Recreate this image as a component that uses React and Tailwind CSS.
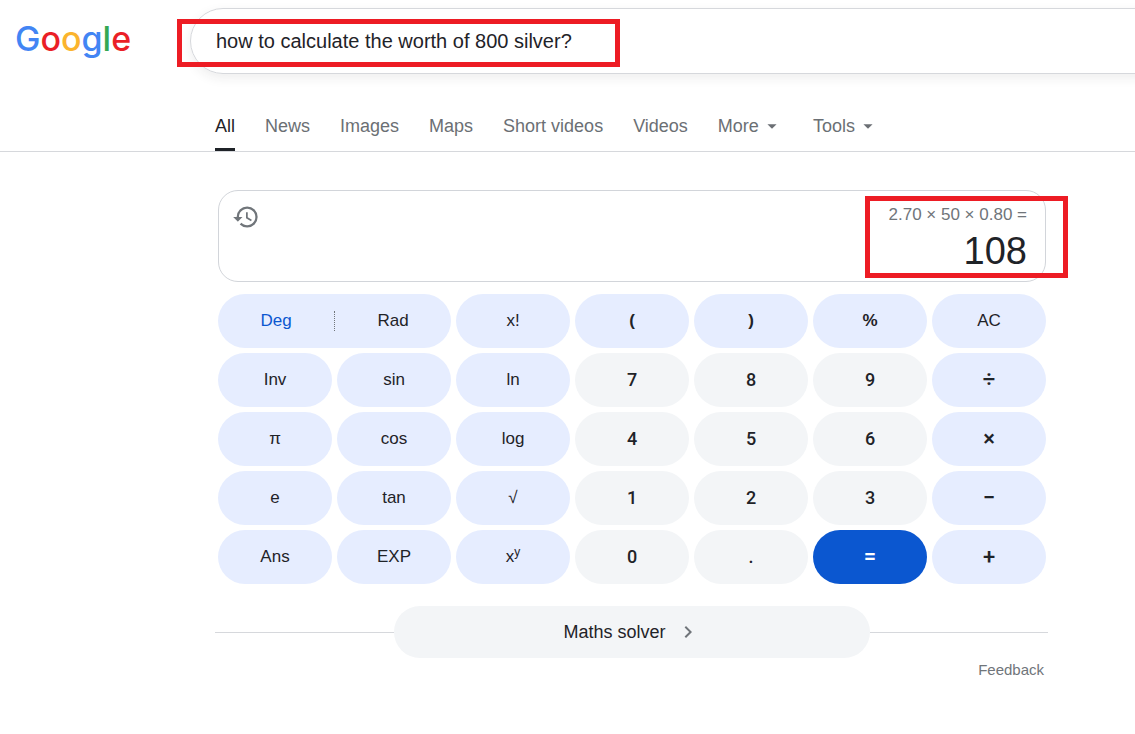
import React from 'react';
import { MdArrowDropDown, MdChevronRight, MdHistory } from 'react-icons/md';

const tabs = ['All', 'News', 'Images', 'Maps', 'Short videos', 'Videos'];
const menus = ['More', 'Tools'];

const keys = [
  { label: 'x!', kind: 'fn' },
  { label: '(', kind: 'op' },
  { label: ')', kind: 'op' },
  { label: '%', kind: 'op' },
  { label: 'AC', kind: 'fn' },
  { label: 'Inv', kind: 'fn' },
  { label: 'sin', kind: 'fn' },
  { label: 'ln', kind: 'fn' },
  { label: '7', kind: 'num' },
  { label: '8', kind: 'num' },
  { label: '9', kind: 'num' },
  { label: '÷', kind: 'sign' },
  { label: 'π', kind: 'fn' },
  { label: 'cos', kind: 'fn' },
  { label: 'log', kind: 'fn' },
  { label: '4', kind: 'num' },
  { label: '5', kind: 'num' },
  { label: '6', kind: 'num' },
  { label: '×', kind: 'sign' },
  { label: 'e', kind: 'fn' },
  { label: 'tan', kind: 'fn' },
  { label: '√', kind: 'fn' },
  { label: '1', kind: 'num' },
  { label: '2', kind: 'num' },
  { label: '3', kind: 'num' },
  { label: '−', kind: 'sign' },
  { label: 'Ans', kind: 'fn' },
  { label: 'EXP', kind: 'fn' },
  { label: 'x', sup: 'y', kind: 'fn' },
  { label: '0', kind: 'num' },
  { label: '.', kind: 'num' },
  { label: '=', kind: 'equals' },
  { label: '+', kind: 'sign' },
];

const keyStyles = {
  fn: 'bg-[#e6edff] text-[17px]',
  op: 'bg-[#e6edff] text-[17px] font-bold',
  sign: 'bg-[#e6edff] pb-[2px] font-[Roboto] text-[22px] font-medium',
  num: 'bg-[#f3f5f7] font-[Roboto] text-lg font-medium',
  equals: 'bg-[#0b57d0] pb-[2px] font-[Roboto] text-[22px] font-medium text-white',
};

const Logo = () => (
  <a href="#" aria-label="Google" className="block w-[190px] shrink-0 pl-[15px] font-[Inter] text-[34px] leading-[62px] font-medium">
    <span className="text-[#4285f4]">G</span>
    <span className="text-[#ea1f27]">o</span>
    <span className="text-[#fbb42d]">o</span>
    <span className="text-[#4285f4]">g</span>
    <span className="text-[#34a853]">l</span>
    <span className="text-[#ea1f27]">e</span>
  </a>
);

const Key = ({ label, sup, kind }) => (
  <button type="button" className={`flex h-[54px] items-center justify-center rounded-full ${keyStyles[kind]}`}>
    <span>
      {label}
      {sup && <sup className="text-xs">{sup}</sup>}
    </span>
  </button>
);

const Calculator = () => (
  <section className="pr-[2px] pl-[3px]">
    {/* Display */}
    <div className="relative flex h-[92px] justify-between rounded-[20px] border border-[#d2d5da] pt-3 pr-[18px] pl-[13px]">
      <button type="button" aria-label="History" className="self-start text-[#70757a]">
        <MdHistory className="size-7" />
      </button>
      <div className="text-right">
        <div className="text-[17px] leading-6 text-[#70757a]">2.70 × 50 × 0.80 =</div>
        <div className="text-[38px] leading-[48px]">108</div>
      </div>
      <div className="pointer-events-none absolute top-[5px] -right-[23px] h-[82px] w-[203px] border-5 border-[#ed1c24]" />
    </div>

    {/* Keypad */}
    <div className="mt-3 grid grid-cols-7 gap-[5px]">
      <div className="col-span-2 flex h-[54px] items-center rounded-full bg-[#e6edff] text-[17px]">
        <button type="button" className="flex-1 text-[#0b57d0]">Deg</button>
        <div className="h-5 border-l border-dotted border-[#70757a]" />
        <button type="button" className="flex-1">Rad</button>
      </div>
      {keys.map((key) => (
        <Key key={key.label} {...key} />
      ))}
    </div>
  </section>
);

const App = () => {
  return (
    <div className="overflow-x-hidden bg-white font-['Liberation_Sans',Arial,sans-serif] text-[#1f2328]">
      {/* Header */}
      <header className="flex pt-2">
        <Logo />
        <form className="relative -mr-10 flex h-[66px] flex-1 items-center rounded-full border border-[#d6d8dc] pl-[25px] shadow-[0_4px_12px_rgba(32,33,36,0.08)]">
          <input
            type="text"
            aria-label="Search"
            defaultValue="how to calculate the worth of 800 silver?"
            className="w-full bg-transparent text-xl outline-none"
          />
          <div className="pointer-events-none absolute top-[10px] -left-[14px] h-12 w-[443px] border-5 border-[#ed1c24]" />
        </form>
      </header>

      {/* Tabs */}
      <nav className="mt-[26px] flex h-[52px] gap-[30px] border-b border-[#d6d8dc] pl-[215px] text-lg text-[#6b6f74]">
        {tabs.map((tab) => (
          <a
            key={tab}
            href="#"
            className={`flex items-center whitespace-nowrap ${tab === 'All' ? 'border-y-3 border-t-transparent border-b-[#1f2328] text-[#1f2328]' : ''}`}
          >
            {tab}
          </a>
        ))}
        {menus.map((menu) => (
          <button key={menu} type="button" className="flex items-center gap-[2px]">
            {menu}
            <MdArrowDropDown className="size-[22px]" />
          </button>
        ))}
      </nav>

      <main className="mt-[38px] ml-[215px] max-w-[833px]">
        <Calculator />

        {/* Expander */}
        <div className="mt-[22px] flex items-center">
          <div className="h-px flex-1 bg-[#d6d8dc]" />
          <button
            type="button"
            className="flex h-[52px] w-4/7 items-center justify-center gap-[10px] rounded-full bg-[#f3f5f7] text-lg"
          >
            Maths solver
            <MdChevronRight className="size-6 text-[#70757a]" />
          </button>
          <div className="h-px flex-1 bg-[#d6d8dc]" />
        </div>
        <div className="flex justify-end pt-[2px] pr-1">
          <a href="#" className="text-[15px] leading-5 text-[#70757a]">Feedback</a>
        </div>
      </main>
    </div>
  );
};

export default App;
